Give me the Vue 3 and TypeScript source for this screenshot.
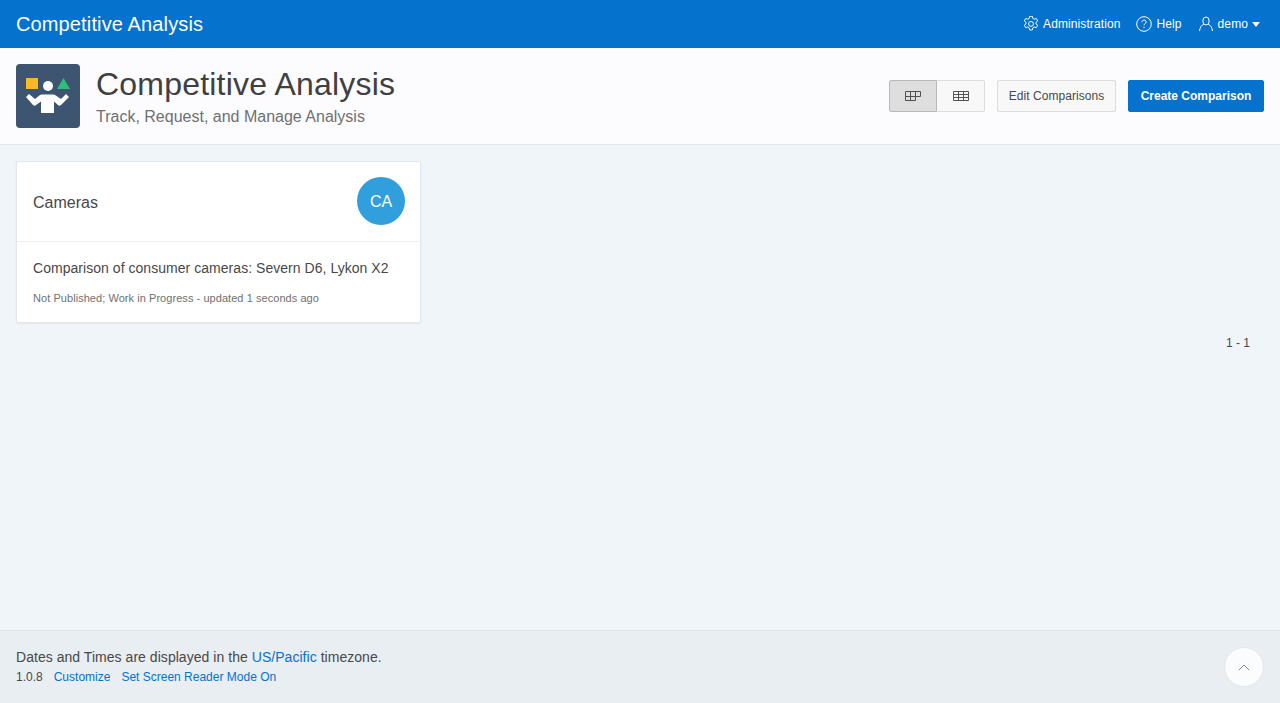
<template>
  <div class="page">
    <header class="topbar">
      <div class="app-name">Competitive Analysis</div>
      <nav class="nav">
        <a class="nav-item">
          <svg class="nav-icon" viewBox="1 0.5 14 15" fill="none" stroke="#fff" stroke-width="0.9" stroke-linejoin="round">
            <path d="M6.7 .8h2.600l.4 2 1.300.7 1.900-.7 1.400 2.300-1.600 1.300v1.500l1.600 1.300-1.400 2.300-1.900-.7-1.300.8-.4 2H6.700l-.4-2-1.300-.8-1.900.7-1.400-2.300 1.600-1.300V6.400L1.700 5.100l1.400-2.300 1.900.7 1.300-.7z" />
            <circle cx="8" cy="7.900" r="2.300" />
          </svg>
          <span>Administration</span>
        </a>
        <a class="nav-item">
          <svg class="nav-icon" viewBox="0 0 16 16" fill="none" stroke="#fff" stroke-width="1">
            <circle cx="8" cy="8" r="7.300" />
            <path d="M5.900 6.200c0-1.300 1-2.100 2.200-2.100s2.100.8 2.100 1.900c0 1.600-2.200 1.600-2.200 3.400" />
            <path d="M8 10.800v1.300" />
          </svg>
          <span>Help</span>
        </a>
        <a class="nav-item">
          <svg class="nav-icon" viewBox="0 0 16 16" fill="none" stroke="#fff" stroke-width="1">
            <ellipse cx="8" cy="5" rx="3.200" ry="4" />
            <path d="M5.800 8.200C3.600 9.200 2 11 1.500 15M10.200 8.200c2.200 1 3.800 2.800 4.300 6.800" />
          </svg>
          <span>demo</span>
          <i class="caret"></i>
        </a>
      </nav>
    </header>

    <section class="hero">
      <div class="logo">
        <svg viewBox="0 0 64 64" width="64" height="64">
          <rect x="10" y="14" width="12" height="11" fill="#fdb827" />
          <path d="M41 25l6.500-11 6.500 11z" fill="#2bbf7e" />
          <circle cx="32" cy="22" r="5" fill="#fff" />
          <path d="M10 33l3-3 6 5 5-4c1-.5 2-.5 3-.5h9c1 0 2 0 3 .5l6 4 5-5 3 3-8 8c-1 1-2 1-3 0l-4-3.500V49H25V37.500L20 41c-1 1-2 1-3 0z" fill="#fff" />
        </svg>
      </div>
      <div class="hero-text">
        <h1>Competitive Analysis</h1>
        <p>Track, Request, and Manage Analysis</p>
      </div>
      <div class="actions">
        <div class="toggle">
          <button class="btn toggle-left" type="button">
            <svg width="16" height="10" viewBox="0 0 16 10" fill="none" stroke="#505050" stroke-width="1">
              <path d="M.5 .5h15v5h-5v4H.5zM.5 5.500h10M5.500 .5v9M10.500 .5v5" />
            </svg>
          </button>
          <button class="btn toggle-right" type="button">
            <svg width="16" height="10" viewBox="0 0 16 10" fill="none" stroke="#505050" stroke-width="1">
              <path d="M.5 .5h15v9H.5zM.5 3.500h15M.5 6.500h15M5.500 .5v9M10.500 .5v9" />
            </svg>
          </button>
        </div>
        <button class="btn edit" type="button">Edit Comparisons</button>
        <button class="btn create" type="button">Create Comparison</button>
      </div>
    </section>

    <main class="content">
      <article class="card">
        <div class="card-head">
          <h2>Cameras</h2>
          <div class="avatar">CA</div>
        </div>
        <div class="card-body">
          <p class="desc">Comparison of consumer cameras: Severn D6, Lykon X2</p>
          <p class="meta">Not Published; Work in Progress - updated 1 seconds ago</p>
        </div>
      </article>
      <div class="pagination">1 - 1</div>
    </main>

    <footer class="footer">
      <div class="footer-text">
        <p class="tz">Dates and Times are displayed in the <a>US/Pacific</a> timezone.</p>
        <p class="links">
          <span>1.0.8</span>
          <a>Customize</a>
          <a>Set Screen Reader Mode On</a>
        </p>
      </div>
      <button class="top-btn" type="button" aria-label="Top">
        <svg width="12" height="7" viewBox="0 0 12 7" fill="none" stroke="#8a8a8a" stroke-width="1">
          <path d="M.8 6.200L6 1l5.200 5.200" />
        </svg>
      </button>
    </footer>
  </div>
</template>

<script setup lang="ts">
</script>

<style>
html,
body {
  margin: 0;
  background: #f0f5f9;
}
</style>

<style scoped>
.page {
  display: flex;
  flex-direction: column;
  height: 703px;
  overflow: hidden;
  font-family: "Liberation Sans", Arial, sans-serif;
  color: #484848;
  background: #f0f5f9;
}

.topbar {
  display: flex;
  align-items: center;
  justify-content: space-between;
  flex: none;
  height: 48px;
  padding: 0 20px 0 16px;
  background: #0572ce;
  color: #fff;
}

.app-name {
  font-size: 20px;
  letter-spacing: 0.13px;
}

.nav {
  display: flex;
  align-items: center;
  gap: 16px;
}

.nav-item {
  display: flex;
  align-items: center;
  gap: 4px;
  font-size: 12px;
}

.nav-item span {
  letter-spacing: 0.1px;
}

.nav-icon {
  width: 16px;
  height: 16px;
}

.caret {
  width: 0;
  height: 0;
  border-left: 4px solid transparent;
  border-right: 4px solid transparent;
  border-top: 5px solid #fff;
}

.hero {
  display: flex;
  align-items: center;
  flex: none;
  box-sizing: border-box;
  height: 97px;
  padding: 0 16px 1px;
  background: #fcfcfe;
  border-bottom: 1px solid #dfe6ec;
}

.logo {
  flex: none;
  width: 64px;
  height: 64px;
  border-radius: 4px;
  background: #3d5570;
  overflow: hidden;
}

.hero-text {
  flex: 1;
  margin-left: 16px;
  padding-bottom: 1px;
}

.hero-text h1 {
  margin: 0;
  font-size: 32px;
  font-weight: 400;
  line-height: 40px;
  letter-spacing: 0.2px;
  color: #404040;
}

.hero-text p {
  margin: 3px 0 0;
  font-size: 16px;
  line-height: 20px;
  color: #707070;
}

.actions {
  display: flex;
  align-items: center;
  gap: 12px;
}

.toggle {
  display: flex;
}

.btn {
  box-sizing: border-box;
  height: 32px;
  margin: 0;
  border: 1px solid #dcdcdc;
  border-radius: 2px;
  background: #f8f8f8;
  font-family: inherit;
  font-size: 12px;
  color: #484848;
}

.toggle-left,
.toggle-right {
  display: flex;
  align-items: center;
  justify-content: center;
  width: 48px;
  padding: 0;
}

.toggle-left {
  background: #dedede;
  border-color: #b8b8b8;
  border-radius: 2px 0 0 2px;
}

.toggle-right {
  border-left: none;
  border-radius: 0 2px 2px 0;
}

.edit {
  width: 119px;
  padding: 0;
  letter-spacing: 0.05px;
}

.create {
  width: 136px;
  padding: 0;
  border-color: #0572ce;
  background: #0572ce;
  color: #fff;
  font-weight: 700;
}

.content {
  flex: 1;
  padding: 16px;
}

.card {
  box-sizing: border-box;
  width: 405px;
  height: 162px;
  background: #fff;
  border: 1px solid #e2e7ec;
  border-radius: 2px;
  box-shadow: 0 1px 2px rgba(0, 0, 0, 0.06);
}

.card-head {
  display: flex;
  align-items: center;
  justify-content: space-between;
  box-sizing: border-box;
  height: 80px;
  padding: 0 15px 0 16px;
  border-bottom: 1px solid #f0f0f0;
}

.card-head h2 {
  margin: 2px 0 0;
  font-size: 16px;
  font-weight: 400;
  color: #484848;
}

.avatar {
  display: flex;
  align-items: center;
  justify-content: center;
  box-sizing: border-box;
  width: 48px;
  height: 48px;
  margin-bottom: 1px;
  padding-top: 2px;
  border-radius: 50%;
  background: #309fdb;
  color: #fff;
  font-size: 16px;
}

.card-body {
  padding: 18px 16px 0;
}

.desc {
  margin: 0;
  font-size: 14px;
  line-height: 16px;
  letter-spacing: 0.04px;
}

.meta {
  margin: 14px 0 0;
  font-size: 11px;
  line-height: 16px;
  letter-spacing: 0.055px;
  color: #707070;
}

.pagination {
  margin-top: 12px;
  padding-right: 14px;
  font-size: 12px;
  line-height: 16px;
  text-align: right;
}

.footer {
  display: flex;
  align-items: center;
  justify-content: space-between;
  flex: none;
  box-sizing: border-box;
  height: 73px;
  padding: 0 16px;
  background: #e9eef2;
  border-top: 1px solid #dfe4e9;
}

.footer-text {
  margin-bottom: 2px;
}

.tz {
  margin: 0;
  font-size: 14px;
  line-height: 20px;
  letter-spacing: 0.04px;
}

.footer a {
  color: #0572ce;
}

.links {
  display: flex;
  gap: 11px;
  margin: 2px 0 0;
  font-size: 12px;
  line-height: 16px;
}

.top-btn {
  display: flex;
  align-items: center;
  justify-content: center;
  width: 40px;
  height: 40px;
  padding: 0;
  border: 1px solid #e4e8ec;
  border-radius: 50%;
  background: #fbfcfe;
}
</style>
